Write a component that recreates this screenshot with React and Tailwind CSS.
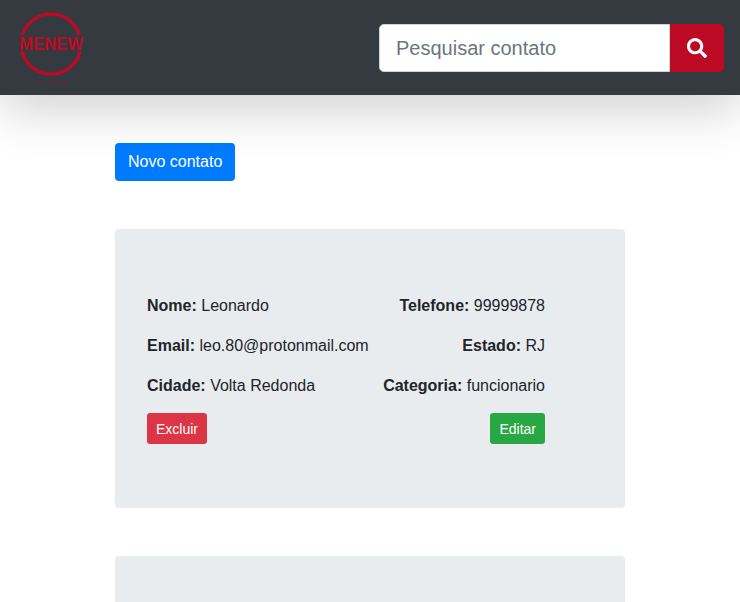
import { FaSearch } from 'react-icons/fa';

function Logo() {
  return (
    <svg width="76" height="85" viewBox="16 5 76 85" className="block">
      {/* circle is split where the wordmark crosses it */}
      <path d="M22.4 35 A30 30 0 0 1 79.6 35" fill="none" stroke="#bc0a24" strokeWidth="3.4" />
      <path d="M80.2 51 A30 30 0 0 1 21.8 51" fill="none" stroke="#bc0a24" strokeWidth="3.4" />
      <text x="19" y="50" textLength="64" lengthAdjust="spacingAndGlyphs" fill="#bc0a24" fontFamily="Liberation Sans, sans-serif" fontWeight="700" fontSize="18">
        MENEW
      </text>
      <rect x="38" y="81" width="2" height="2" fill="#8e1028" />
      <rect x="47" y="81" width="2" height="2" fill="#8e1028" />
      <rect x="52" y="81" width="3" height="2" fill="#8e1028" />
      <rect x="62" y="81" width="3" height="2" fill="#8e1028" />
    </svg>
  );
}

function Field({ label, value }) {
  return (
    <p className="pt-px -mb-px">
      <b className="font-bold">{label}:</b> {value}
    </p>
  );
}

function ContactCard({ rows }) {
  return (
    <div className="bg-[#e9ecef] rounded px-8 py-16 mb-12">
      <div className="pr-12">
        {rows.map((row) => (
          <div key={row[0].label} className="flex justify-between mb-4">
            <Field {...row[0]} />
            <Field {...row[1]} />
          </div>
        ))}
        <div className="flex justify-between">
          <button className="bg-[#dc3545] text-white text-sm leading-[21px] px-[9px] pt-[6px] pb-[4px] rounded-[3.2px]">Excluir</button>
          <button className="bg-[#28a745] text-white text-sm leading-[21px] px-[9px] pt-[6px] pb-[4px] rounded-[3.2px]">Editar</button>
        </div>
      </div>
    </div>
  );
}

const rows = [
  [{ label: 'Nome', value: 'Leonardo' }, { label: 'Telefone', value: '99999878' }],
  [{ label: 'Email', value: 'leo.80@protonmail.com' }, { label: 'Estado', value: 'RJ' }],
  [{ label: 'Cidade', value: 'Volta Redonda' }, { label: 'Categoria', value: 'funcionario' }],
];

export default function App() {
  return (
    <div className="h-[602px] overflow-hidden bg-white text-[#212529] text-base leading-6 font-['Liberation_Sans',sans-serif]">
      <header className="relative h-[95px] bg-[#343a40] px-4 flex items-center justify-between shadow-[0_16px_48px_rgba(0,0,0,0.175)]">
        <Logo />
        <form className="flex">
          <input
            placeholder="Pesquisar contato"
            className="w-[291px] h-12 bg-white border border-[#ced4da] rounded-l-[4.8px] px-4 pt-px text-xl text-[#495057] placeholder:text-[#6c757d] outline-none"
          />
          <button type="button" className="w-[54px] h-12 bg-[#bc0a24] rounded-r-[4.8px] text-white flex items-center justify-center">
            <FaSearch size={20} />
          </button>
        </form>
      </header>
      <main className="w-[510px] mx-auto pt-12">
        <button className="block bg-[#007bff] text-white px-[13px] py-[7px] rounded mb-12">Novo contato</button>
        <ContactCard rows={rows} />
        <div className="bg-[#e9ecef] rounded h-[279px]" />
      </main>
    </div>
  );
}
